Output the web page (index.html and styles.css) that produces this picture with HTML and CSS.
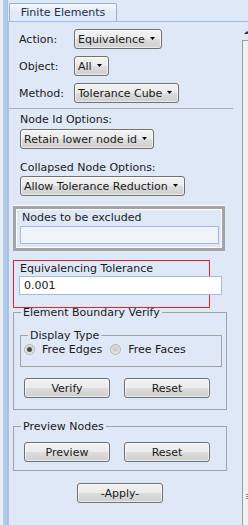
FILE: index.html
```html
<!DOCTYPE html>
<html>
<head>
<meta charset="utf-8">
<link rel="stylesheet" href="styles.css">
</head>
<body>
<div class="page">
  <div class="edge"></div>
  <div class="main">
    <div class="tabbar">
      <div class="tab">Finite Elements</div>
    </div>
    <div class="panel">
      <div class="content">
        <div class="row">
          <span class="lbl">Action:</span>
          <span class="dd">Equivalence<svg class="caret" width="5" height="3" viewBox="0 0 5 3"><path d="M0 0H5L2.5 3Z"/></svg></span>
        </div>
        <div class="row">
          <span class="lbl">Object:</span>
          <span class="dd">All<svg class="caret" width="5" height="3" viewBox="0 0 5 3"><path d="M0 0H5L2.5 3Z"/></svg></span>
        </div>
        <div class="row">
          <span class="lbl">Method:</span>
          <span class="dd">Tolerance Cube<svg class="caret" width="5" height="3" viewBox="0 0 5 3"><path d="M0 0H5L2.5 3Z"/></svg></span>
        </div>
        <div class="sep"></div>
        <div class="text t-node">Node Id Options:</div>
        <div class="ddwrap w-node"><span class="dd">Retain lower node id<svg class="caret" width="5" height="3" viewBox="0 0 5 3"><path d="M0 0H5L2.5 3Z"/></svg></span></div>
        <div class="text t-coll">Collapsed Node Options:</div>
        <div class="ddwrap w-coll"><span class="dd">Allow Tolerance Reduction<svg class="caret" width="5" height="3" viewBox="0 0 5 3"><path d="M0 0H5L2.5 3Z"/></svg></span></div>

        <div class="exclude">
          <div class="box-title">Nodes to be excluded</div>
          <div class="input input-pale"></div>
        </div>

        <div class="tolerance">
          <div class="box-title">Equivalencing Tolerance</div>
          <div class="input input-white">0.001</div>
        </div>

        <fieldset class="group ebv">
          <legend>Element Boundary Verify</legend>
          <fieldset class="inner">
            <legend>Display Type</legend>
            <div class="radios">
              <span class="radio checked"></span><span class="rtext">Free Edges</span>
              <span class="radio second"></span><span class="rtext">Free Faces</span>
            </div>
          </fieldset>
          <div class="btns btns-verify">
            <span class="btn">Verify</span>
            <span class="btn">Reset</span>
          </div>
        </fieldset>

        <fieldset class="group preview">
          <legend>Preview Nodes</legend>
          <div class="btns btns-preview">
            <span class="btn">Preview</span>
            <span class="btn">Reset</span>
          </div>
        </fieldset>

        <div class="apply-row"><span class="btn">-Apply-</span></div>
      </div>
      <div class="scroll">
        <div class="arrow"></div>
        <div class="thumb">
          <div class="grip"></div>
        </div>
      </div>
    </div>
  </div>
</div>
</body>
</html>
```

FILE: styles.css
```css
* { box-sizing: border-box; }
html, body {
  margin: 0;
  padding: 0;
  width: 248px;
  height: 525px;
  overflow: hidden;
  background: #dfe8f6;
  font-family: "DejaVu Sans", "Liberation Sans", sans-serif;
  font-size: 11px;
  line-height: 13px;
  color: #1a1a1a;
}
.page {
  display: flex;
  height: 525px;
}
.edge {
  width: 8px;
  flex: none;
  background: linear-gradient(to right, #e9eff8 0 3px, #b5cbea 3px 7px, #a7c0e6 7px 8px);
}
.main {
  flex: 1;
  display: flex;
  flex-direction: column;
  min-width: 0;
}
.tabbar {
  height: 21px;
  padding: 3px 0 0 1px;
  flex: none;
}
.tab {
  width: 108px;
  height: 18px;
  border: 1px solid #8fb1df;
  border-bottom: none;
  border-radius: 2px 2px 0 0;
  background: linear-gradient(#f7fafe, #e2eaf6 45%, #dfe8f6);
  color: #1d3153;
  text-align: center;
  padding-top: 2px;
  white-space: nowrap;
}
.panel {
  flex: 1;
  display: flex;
  border-top: 1px solid #99bbe8;
  border-left: 1px solid #a9c3e8;
  min-height: 0;
}
.content {
  flex: 1;
  padding: 7px 0 0 10px;
  min-width: 0;
}
.row {
  display: flex;
  align-items: center;
  height: 20px;
}
.row + .row { margin-top: 7px; }
.lbl { width: 55px; flex: none; }
.dd {
  display: inline-flex;
  align-items: center;
  gap: 5px;
  height: 20px;
  padding: 0 6px 0 3px;
  border: 1px solid #707070;
  border-radius: 3px;
  background: linear-gradient(#f2f2f2 0%, #ebebeb 50%, #dddddd 50%, #cfcfcf 100%);
  box-shadow: inset 0 0 0 1px rgba(255,255,255,0.6);
  white-space: nowrap;
}
.caret { display: block; fill: #000; margin-top: -1px; }
.sep {
  margin: 5px 0 0 -10px;
  width: 224px;
  height: 1px;
  background: #a7b0bc;
}
.text { margin-left: 1px; white-space: nowrap; }
.t-node { margin-top: 4px; }
.t-coll { margin-top: 12px; }
.ddwrap { margin-left: 1px; display: flex; }
.w-node { margin-top: 3px; }
.w-coll { margin-top: 2px; }

.exclude {
  margin: 10px 0 0 -6px;
  width: 212px;
  height: 45px;
  border: 3px solid #a4a4a4;
  box-shadow: inset 0 0 0 1px #ffffff, 0 -1px 0 #ffffff;
  padding: 2px 3px 4px 4px;
}
.exclude .box-title { margin-left: 2px; }
.input {
  height: 18px;
  margin-top: 2px;
  border: 1px solid #a6badb;
  padding: 1px 0 0 3px;
  white-space: nowrap;
}
.input-pale { background: #eff4fb; }
.tolerance {
  margin: 9px 0 0 -6px;
  width: 197px;
  height: 48px;
  border: 1px solid #e0242c;
  padding: 1px 0 0 5px;
}
.tolerance .box-title { margin-left: 1px; }
.input-white {
  background: #ffffff;
  width: 203px;
  height: 19px;
  margin-top: 1px;
  padding: 2px 0 0 4px;
}

.group {
  margin: 0 0 0 -6px;
  width: 214px;
  border: 1px solid #a2a2a2;
  padding: 10px 5px 11px 6px;
  min-width: 0;
}
.group > legend {
  padding: 0 2px;
  margin-left: 1px;
  line-height: 13px;
}
.ebv { margin-top: -2px; }
.preview { margin-top: 10px; padding-top: 9px; padding-bottom: 8px; }
.inner {
  margin: 0;
  width: 202px;
  border: 1px solid #a2a2a2;
  padding: 1px 3px 10px 3px;
  min-width: 0;
}
.inner > legend {
  padding: 0 2px;
  margin-left: 4px;
  line-height: 13px;
}
.radios {
  display: flex;
  align-items: center;
  height: 13px;
}
.radio {
  width: 11px;
  height: 11px;
  border-radius: 50%;
  border: 1px solid #b4b4b4;
  background: radial-gradient(circle at 50% 45%, #c9c9c9 0, #d6d6d6 45%, #ececec 75%, #f6f6f6 100%);
  margin-right: 7px;
  flex: none;
  position: relative;
}
.radio.checked::after {
  content: "";
  position: absolute;
  left: 2px;
  top: 2px;
  width: 5px;
  height: 5px;
  border-radius: 50%;
  background: radial-gradient(circle, #3c3c3c 0, #555 60%, #888 100%);
}
.radio.second { margin-left: 8px; }
.rtext { white-space: nowrap; }

.btns {
  display: flex;
  gap: 14px;
  margin-left: 4px;
}
.btns-verify { margin-top: 11px; }
.btn {
  display: inline-flex;
  align-items: center;
  justify-content: center;
  width: 86px;
  height: 20px;
  border: 1px solid #707070;
  border-radius: 3px;
  background: linear-gradient(#f2f2f2 0%, #ebebeb 50%, #dddddd 50%, #cfcfcf 100%);
  box-shadow: inset 0 0 0 1px rgba(255,255,255,0.6);
  white-space: nowrap;
}
.apply-row {
  margin: 12px 0 0 58px;
  display: flex;
}

.scroll {
  width: 7px;
  flex: none;
  display: flex;
  flex-direction: column;
  padding-top: 9px;
}
.arrow {
  margin-left: 3px;
  width: 0;
  height: 0;
  border-left: 3px solid transparent;
  border-right: 3px solid transparent;
  border-bottom: 3px solid #333;
}
.thumb {
  flex: 1;
  margin-top: 6px;
  margin-left: 1px;
  border-left: 1px solid #9c9c9c;
  border-top: 1px solid #9c9c9c;
  background: #f1f1f1;
  position: relative;
}
.grip {
  position: absolute;
  left: 3px;
  top: 453px;
  width: 3px;
  height: 5px;
  background: repeating-linear-gradient(#8a8a8a 0 1px, transparent 1px 2px);
}
```
